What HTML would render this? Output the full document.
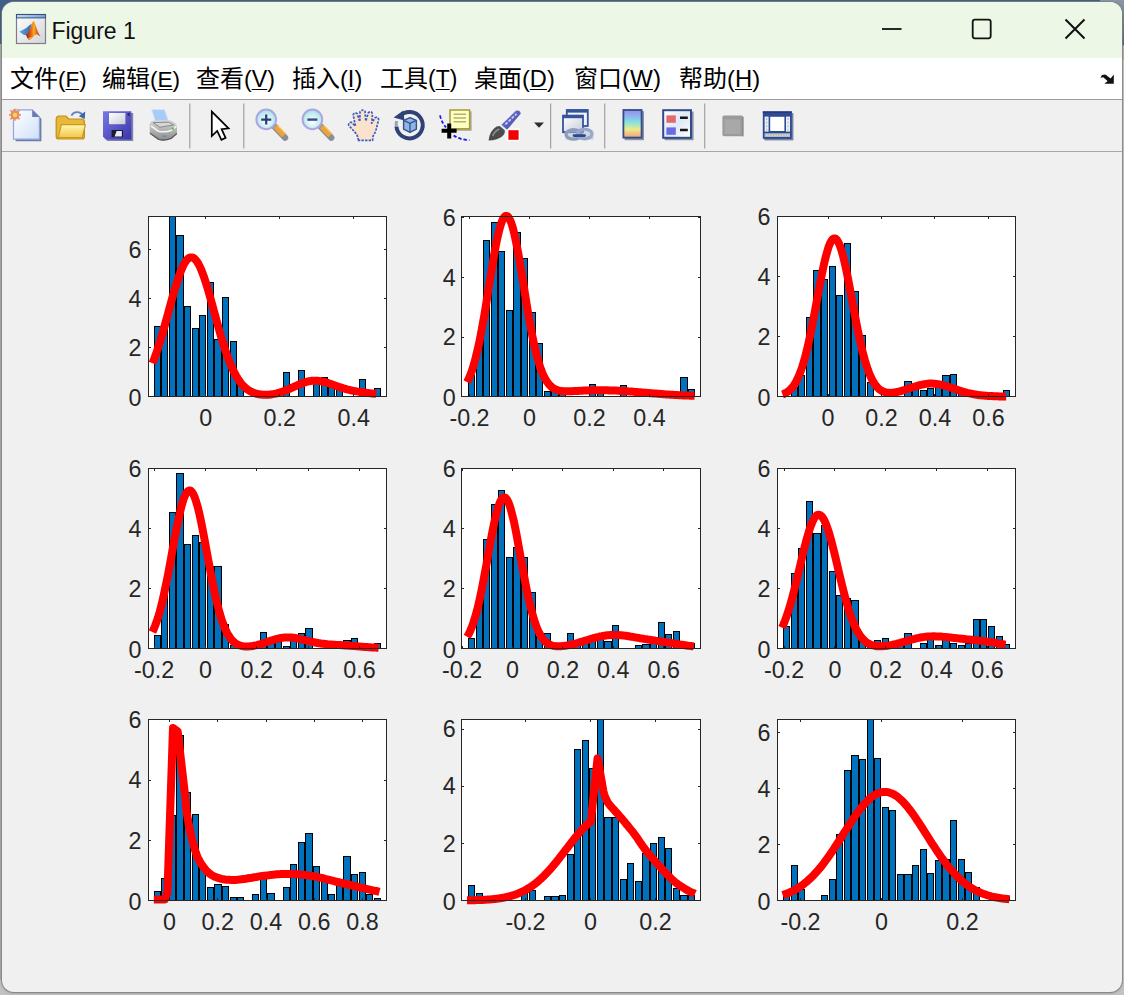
<!DOCTYPE html>
<html lang="zh-CN">
<head>
<meta charset="utf-8">
<title>Figure 1</title>
<style>
html,body{margin:0;padding:0;}
body{width:1124px;height:995px;overflow:hidden;position:relative;background:#c2c2c2;font-family:"Liberation Sans","Noto Sans CJK SC",sans-serif;}
.desk-top{position:absolute;left:0;top:0;width:1124px;height:44px;background:#3f6088;}
.desk-l{position:absolute;left:0;top:0;width:14px;height:980px;background:#ababab;}
.desk-r{position:absolute;left:1100px;top:0;width:24px;height:60px;background:linear-gradient(#8796a8,#6a7278 60%,#3c628f 75%,#b0b0b0 76%);}
.win{position:absolute;left:2px;top:2px;width:1120px;height:990px;border-radius:12px;background:#f0f0f0;overflow:hidden;box-shadow:0 0 0 1px rgba(130,130,130,.75),0 1px 3px 0 rgba(0,0,0,.28);}
.title{position:absolute;left:0;top:0;width:1120px;height:56px;background:#edf7e5;}
.title .t{position:absolute;left:49.4px;top:14px;font-size:23px;line-height:30px;color:#111;}
.menu{position:absolute;left:0;top:56px;width:1120px;height:41px;background:#fff;}
.menu span.m{position:absolute;top:4px;font-size:24px;line-height:34px;color:#000;white-space:nowrap;}
.menu b{font-weight:normal;font-size:22.4px;}
.menu u{text-decoration:underline;text-underline-offset:1.6px;text-decoration-thickness:1.3px;}
.tb{position:absolute;left:0;top:97px;width:1120px;height:53px;background:#f0f0f0;border-top:1px solid #9c9c9c;border-bottom:1px solid #a6a6a6;box-sizing:border-box;}
svg.ov{position:absolute;left:0;top:0;}
</style>
</head>
<body>
<div class="desk-l"></div>
<div class="desk-top"></div>
<div class="desk-r"></div>
<div class="win">
  <div class="title"><span class="t">Figure 1</span></div>
  <div class="menu">
    <span class="m" style="left:8px">文件<b style="font-size:22.4px">(<u>F</u>)</b></span>
    <span class="m" style="left:100px">编辑<b style="font-size:22.6px">(<u>E</u>)</b></span>
    <span class="m" style="left:194px">查看<b style="font-size:23.2px">(<u>V</u>)</b></span>
    <span class="m" style="left:290px">插入<b style="font-size:23.6px">(<u>I</u>)</b></span>
    <span class="m" style="left:378px">工具<b style="font-size:23px">(<u>T</u>)</b></span>
    <span class="m" style="left:472px">桌面<b style="font-size:23.6px">(<u>D</u>)</b></span>
    <span class="m" style="left:572px">窗口<b style="font-size:24.2px">(<u>W</u>)</b></span>
    <span class="m" style="left:677px">帮助<b style="font-size:23.8px">(<u>H</u>)</b></span>
  </div>
  <div class="tb"></div>
</div>
<svg class="ov" width="1124" height="995" viewBox="0 0 1124 995">
<defs>
  <linearGradient id="gPage" x1="0" y1="0" x2="1" y2="1"><stop offset="0" stop-color="#ffffff"/><stop offset="1" stop-color="#cfe0fb"/></linearGradient>
  <linearGradient id="gFold" x1="0" y1="0" x2="0" y2="1"><stop offset="0" stop-color="#fff6b0"/><stop offset="1" stop-color="#f3c64a"/></linearGradient>
  <linearGradient id="gSave" x1="0" y1="0" x2="1" y2="1"><stop offset="0" stop-color="#7a78e6"/><stop offset="1" stop-color="#3a34a8"/></linearGradient>
  <linearGradient id="gLabel" x1="0" y1="0" x2="1" y2="1"><stop offset="0" stop-color="#ffffff"/><stop offset="1" stop-color="#c8ccd8"/></linearGradient>
  <radialGradient id="gLens" cx="0.5" cy="0.6" r="0.6"><stop offset="0" stop-color="#ffffff"/><stop offset="0.6" stop-color="#c8eef2"/><stop offset="1" stop-color="#a8dce8"/></radialGradient>
  <linearGradient id="gCbar" x1="0" y1="0" x2="0" y2="1"><stop offset="0" stop-color="#9a8ce8"/><stop offset="0.25" stop-color="#8cb8f0"/><stop offset="0.45" stop-color="#86e4dc"/><stop offset="0.7" stop-color="#efe88a"/><stop offset="1" stop-color="#f2a07c"/></linearGradient>
  <linearGradient id="gLeg" x1="0" y1="0" x2="1" y2="1"><stop offset="0" stop-color="#ffffff"/><stop offset="0.5" stop-color="#dfe8f6"/><stop offset="1" stop-color="#ffffff"/></linearGradient>
  <linearGradient id="gPrn" x1="0" y1="0" x2="0" y2="1"><stop offset="0" stop-color="#d8d8d8"/><stop offset="1" stop-color="#8c8c8c"/></linearGradient>
  <linearGradient id="gIcoBody" x1="0" y1="0" x2="1" y2="1"><stop offset="0" stop-color="#ffffff"/><stop offset="1" stop-color="#d4d4d8"/></linearGradient>
  <linearGradient id="gIcoBar" x1="0" y1="0" x2="1" y2="0"><stop offset="0" stop-color="#b4dcf8"/><stop offset="1" stop-color="#6ea4dc"/></linearGradient>
  <linearGradient id="gMem" x1="0" y1="0" x2="1" y2="0"><stop offset="0" stop-color="#8a1c10"/><stop offset="0.35" stop-color="#e4601c"/><stop offset="0.55" stop-color="#f8b020"/><stop offset="0.75" stop-color="#e4581c"/><stop offset="1" stop-color="#a0281c"/></linearGradient>
  <linearGradient id="gMemB" x1="0" y1="0" x2="1" y2="0"><stop offset="0" stop-color="#58a8e0"/><stop offset="1" stop-color="#2c68a8"/></linearGradient>
  <linearGradient id="gHandle" x1="0" y1="0" x2="1" y2="1"><stop offset="0" stop-color="#7a80d8"/><stop offset="1" stop-color="#3c44a0"/></linearGradient>
</defs>

<!-- title-bar MATLAB figure icon -->
<g>
  <rect x="16.5" y="14.5" width="29" height="29" fill="url(#gIcoBody)" stroke="#7e7e88" stroke-width="1.2"/>
  <rect x="16.5" y="14.5" width="29" height="3.4" fill="url(#gIcoBar)" stroke="#3c5078" stroke-width="1"/>
  <path d="M19.3 31.7 L25.9 28.3 L30.2 24.7 L31.8 23.6 L29.4 31 L25.9 34.9 L24 35 Z" fill="url(#gMemB)"/>
  <path d="M25.9 34.8 C28.4 33 30.6 27.4 31.9 24.2 C32.4 22.8 33 21.2 33.5 21.1 C34.4 21.2 35 23.6 35.6 25.3 C36.6 28.2 37.4 30.6 38.2 32.4 C39 34.2 39.8 35.6 40.7 36.5 C39.4 36 38.4 34.8 37.3 34.4 C36.2 34.2 35.2 34.8 34.3 35.7 C33.2 36.8 32.2 37.8 31.4 38.6 C30.6 39.4 29.8 40 29 40.1 C28.4 39.4 27.8 38.4 27.1 37.4 C26.7 36.6 26.3 35.6 25.9 34.8 Z" fill="url(#gMem)"/>
  <path d="M29 40.1 C30.2 39.6 31.4 38.4 32.6 37 C31.2 37.2 29.6 37.2 28.2 38.6 Z" fill="#f8b828" opacity="0.9"/>
</g>

<!-- window buttons -->
<g stroke="#111" stroke-width="1.8" fill="none">
  <path d="M882 29 H901.5"/>
  <rect x="972.7" y="19.7" width="18" height="18.6" rx="2.2"/>
  <path d="M1065.5 19.5 L1084.5 38.5 M1084.5 19.5 L1065.5 38.5" stroke-width="2"/>
</g>

<!-- menu dock arrow -->
<g fill="#111">
  <path d="M1113.8 74.6 L1113.8 83.8 L1104.4 83.8 L1107.6 80.9 L1103.2 77.2 L1100.4 77.8 L1102 75 L1105.4 74.4 L1110.6 78.4 Z"/>
</g>

<!-- toolbar separators -->
<g stroke="#a2a2a2" stroke-width="1.2">
  <path d="M189.8 103.5 V148.5 M243.8 103.5 V148.5 M550.6 103.5 V148.5 M604.7 103.5 V148.5 M704.7 103.5 V148.5"/>
</g>

<!-- new -->
<g>
  <path d="M15.6 111.6 H34 L41.4 118.8 V141.2 H15.6 Z" fill="#6e7ca6"/>
  <path d="M13.5 109.8 H32.2 L39.4 117 V139.2 H13.5 Z" fill="url(#gPage)" stroke="#8da6dc" stroke-width="1.2"/>
  <path d="M32.2 109.8 V117 H39.4 Z" fill="#6c78b4"/>
  <g stroke="#e88a5c" stroke-width="1.7" stroke-linecap="butt" opacity="0.85">
    <path d="M15 108.8 V120.8 M9 114.8 H21 M10.4 110.2 L19.6 119.4 M19.6 110.2 L10.4 119.4"/>
  </g>
  <rect x="10.8" y="110.8" width="8.4" height="8.4" rx="2.4" fill="#ec8c5c"/>
  <circle cx="15" cy="115" r="2.2" fill="#f6d860"/>
</g>

<!-- open -->
<g>
  <path d="M56.2 119.4 Q56.2 116 59.4 116 H66 L68.6 119 H81.6 Q84.4 119 84.4 122 V136.4 Q84.4 139 81.6 139 H59 Q56.2 139 56.2 136.4 Z" fill="#e8b838" stroke="#c08e18" stroke-width="1.2"/>
  <path d="M61.4 124.6 H85.4 L82.2 137.6 H58 Z" fill="url(#gFold)" stroke="#c99a20" stroke-width="1.2" stroke-linejoin="round"/>
  <path d="M71.4 115.6 C73.6 111.4 80 110.6 83 115.4" fill="none" stroke="#5c84b8" stroke-width="1.8"/>
  <path d="M85.2 111.6 L84.8 119 L78.8 116.2 Z" fill="#3c64a8"/>
</g>

<!-- save -->
<g>
  <path d="M104.6 113 H133.2 V141 H107.4 L104.6 138.2 Z" fill="#5a5c98" opacity="0.75"/>
  <path d="M103 111.2 H131.4 V139.4 H105.8 L103 136.6 Z" fill="url(#gSave)"/>
  <rect x="109" y="113" width="16.4" height="11.2" fill="url(#gLabel)"/>
  <rect x="127.6" y="113" width="2.2" height="3" fill="#2a2670"/>
  <rect x="111.6" y="130" width="11.4" height="7.2" fill="#1c1c30"/>
  <path d="M116.6 131 H121.8 V136.4 H114.6 Z" fill="#e8eaf4"/>
</g>

<!-- print -->
<g>
  <path d="M151.6 109.6 H164.6 L168.6 121.2 H155.2 Z" fill="#a8ccf8" stroke="#d8e6f8" stroke-width="0.8"/>
  <path d="M149.6 125 Q149.4 121.4 154 120.6 L170 120.2 Q176.8 122.4 177 126.6 V133.4 L171.4 138.6 Q165 141.4 158.4 139.8 L149.8 133.4 Z" fill="url(#gPrn)"/>
  <path d="M151 126 L158.4 131.2 Q165 132.6 171.2 130.4 L176.4 126.4" fill="none" stroke="#f4f4f4" stroke-width="1.6"/>
  <path d="M153 122.6 L168.8 122.2 L173.4 125 L160 127.2 Z" fill="#d6d6d6" stroke="#787878" stroke-width="0.8"/>
  <path d="M150 133.2 L158.6 139.4 Q165 141 171.2 138.4 L176.8 133.4" fill="none" stroke="#5c5c5c" stroke-width="1.4"/>
  <rect x="171.6" y="127.6" width="2.2" height="2" fill="#40c848"/>
  <rect x="162.6" y="135.4" width="3.6" height="1.6" fill="#6c84d8"/>
</g>

<!-- pointer -->
<path d="M211.8 111.6 V136 L217.2 131 L221.4 139.8 L225.6 137.8 L221.6 129.2 L228.6 128.4 Z" fill="#fff" stroke="#000" stroke-width="1.7" stroke-linejoin="miter"/>

<!-- zoom in -->
<g>
  <path d="M275 127 L285 137.6" stroke="#8c8c98" stroke-width="6.4" stroke-linecap="round"/>
  <path d="M275.4 126.6 L283.8 135.4" stroke="#eba438" stroke-width="5" stroke-linecap="butt"/>
  <path d="M277.8 125.6 L286 134" stroke="#f6c868" stroke-width="1.2"/>
  <circle cx="266.2" cy="119.4" r="9.8" fill="url(#gLens)" stroke="#a9a9e2" stroke-width="2"/>
  <path d="M261.2 119.6 H271.2 M266.2 114.6 V124.6" stroke="#2a3a78" stroke-width="2.2"/>
</g>
<!-- zoom out -->
<g>
  <path d="M321.2 127 L331.2 137.6" stroke="#8c8c98" stroke-width="6.4" stroke-linecap="round"/>
  <path d="M321.6 126.6 L330 135.4" stroke="#eba438" stroke-width="5" stroke-linecap="butt"/>
  <path d="M324 125.6 L332.2 134" stroke="#f6c868" stroke-width="1.2"/>
  <circle cx="312.4" cy="119.4" r="9.8" fill="url(#gLens)" stroke="#a9a9e2" stroke-width="2"/>
  <path d="M307.4 119.6 H317.4" stroke="#3a4a88" stroke-width="2.4"/>
</g>

<!-- pan hand -->
<path d="M358.6 140.4 L357 134.6 L348.6 125.2 Q348.4 122 351.6 122.4 L355.4 126 L353.2 114.8 Q354.4 111.8 357.2 113.6 L359.8 121.6 L360 111.8 Q362.6 108.6 365 111.4 L365.8 121 L368.4 112.6 Q371.4 110.6 372.6 113.8 L371.6 123.2 L375.2 117.6 Q378.2 116.4 378.6 119.6 L375.6 131.6 L373 136.2 L372.6 140.4 Z" fill="#fbe2cc" stroke="#3a5cc4" stroke-width="1.7" stroke-dasharray="2.4 1.2" stroke-linejoin="round"/>

<!-- rotate 3d -->
<g>
  <path d="M400 116 A13.2 13.2 0 1 1 396.4 126.6" fill="none" stroke="#2e4278" stroke-width="4"/>
  <path d="M396.4 126.6 A13.2 13.2 0 0 1 396.6 121" fill="none" stroke="#2e4278" stroke-width="3" opacity="0.45"/>
  <path d="M393.6 117.4 L403.4 110.4 L404.4 120.6 Z" fill="#2e4278"/>
  <path d="M403.6 120.4 L410 117.6 L416.4 120.4 V129.2 L410 132.4 L403.6 129.2 Z" fill="#8fb4e6" stroke="#35508c" stroke-width="1.4" stroke-linejoin="round"/>
  <path d="M403.6 120.4 L410 123.4 L416.4 120.4 M410 123.4 V132.4" fill="none" stroke="#35508c" stroke-width="1.3"/>
</g>

<!-- data cursor -->
<g>
  <rect x="451.6" y="111.4" width="20" height="19.4" fill="#8c8c78" opacity="0.7"/>
  <rect x="450" y="110" width="19.6" height="18.8" fill="#ffffc4" stroke="#a49c34" stroke-width="1.5"/>
  <path d="M453.6 114.2 H466 M453.6 118 H466 M453.6 121.8 H466" stroke="#b4b070" stroke-width="1.6"/>
  <path d="M440 115.4 Q441.6 122.4 446 127.4" fill="none" stroke="#1818f0" stroke-width="1.8" stroke-dasharray="3.4 2"/>
  <path d="M453.6 135.4 Q460 139.8 469.4 140.2" fill="none" stroke="#1818f0" stroke-width="1.8" stroke-dasharray="3.4 2"/>
  <path d="M441.6 130.8 H456.6 M449.2 123.4 V138.6" stroke="#000" stroke-width="4"/>
</g>

<!-- brush -->
<g>
  <rect x="506.6" y="128.6" width="13.4" height="12.6" fill="#fff"/>
  <rect x="508.4" y="130.2" width="10.2" height="9.6" fill="#f40000"/>
  <path d="M501.4 124.8 L515.8 110.8 Q519.8 109.4 520.8 113.6 L507 129.8 Z" fill="url(#gHandle)"/>
  <path d="M505.4 124.4 L516.6 113.8" stroke="#d0d4f8" stroke-width="1.6" stroke-dasharray="3 1.4"/>
  <path d="M488.6 140.6 Q489.4 131 496.6 126.6 Q501 124.6 504.4 128.2 Q506.2 132.6 502 136.6 Q496.6 140.4 488.6 140.6 Z" fill="#4c4c4c"/>
  <path d="M492.6 136 Q494.4 131.2 499.4 129" fill="none" stroke="#8c8c8c" stroke-width="1.6"/>
  <path d="M500.6 125.6 L506.2 130.4" stroke="#e8e8f0" stroke-width="1.8"/>
</g>
<path d="M534 122.4 H544 L539 127.8 Z" fill="#2c2c2c"/>

<!-- link plots -->
<g>
  <rect x="566.8" y="110" width="21" height="16" fill="#eef2fa" stroke="#35549c" stroke-width="1.8"/>
  <rect x="566.8" y="109.6" width="21" height="3" fill="#35549c"/>
  <rect x="563" y="115.6" width="20" height="16.6" fill="url(#gLabel)" stroke="#35549c" stroke-width="1.8"/>
  <rect x="563" y="115.2" width="20" height="3" fill="#35549c"/>
  <path d="M565.4 139.8 H593.6 V131 Q590 127.6 585 128.4 L566 131 Z" fill="#b8c0d0" opacity="0.55"/>
  <ellipse cx="573.6" cy="134.4" rx="7.6" ry="4.8" fill="none" stroke="#8a9cc0" stroke-width="3.2"/>
  <ellipse cx="584.6" cy="134" rx="7.4" ry="4.8" fill="none" stroke="#98a8cc" stroke-width="3.2"/>
  <path d="M574 135.6 H584.6" stroke="#2c4888" stroke-width="2.6" stroke-linecap="round"/>
</g>

<!-- colorbar -->
<g>
  <rect x="624.6" y="111.2" width="19.4" height="29" fill="#6e7a9a" opacity="0.8"/>
  <rect x="623.4" y="110" width="18.2" height="27.6" fill="url(#gCbar)" stroke="#324a86" stroke-width="1.8"/>
</g>

<!-- legend -->
<g>
  <rect x="664.6" y="111.6" width="29" height="28.6" fill="#6e7a9a" opacity="0.8"/>
  <rect x="663.2" y="110.2" width="27.8" height="27.6" fill="url(#gLeg)" stroke="#324a86" stroke-width="2"/>
  <rect x="666.4" y="115.4" width="9.4" height="7.4" fill="#e26a6a"/>
  <rect x="666.4" y="127.4" width="9.4" height="7.4" fill="#6a6ae4"/>
  <path d="M680 117.8 H687.8 M680 130 H687.8" stroke="#151515" stroke-width="2.6"/>
</g>

<!-- hide plot tools (disabled grey) -->
<g>
  <rect x="722.4" y="115.4" width="20.8" height="20.8" rx="1.6" fill="#9a9a9a"/>
  <rect x="724.4" y="119.4" width="16" height="14.6" fill="#a8a8a8"/>
  <rect x="742" y="117" width="1.6" height="19.4" fill="#8c8c8c"/>
</g>

<!-- show plot tools -->
<g>
  <rect x="764.4" y="113" width="29" height="27.4" fill="#5a6890" opacity="0.8"/>
  <rect x="762.8" y="111.4" width="29" height="27.4" fill="#2f4a94"/>
  <rect x="762.8" y="111.4" width="29" height="1.6" fill="#24387a"/>
  <rect x="764.6" y="116.6" width="4" height="15" fill="#eceff6"/>
  <rect x="786" y="116.6" width="4" height="15" fill="#eceff6"/>
  <rect x="770.2" y="116.8" width="14.2" height="14.2" fill="#ffffff"/>
  <rect x="764.6" y="133.4" width="25.4" height="3.4" fill="#d8d8d0"/>
  <path d="M765 135 H789.6" stroke="#9c9c94" stroke-width="1" stroke-dasharray="1.4 1.2"/>
  <path d="M766.6 118 V130.4 M788 118 V130.4" stroke="#b8bccc" stroke-width="1.2" stroke-dasharray="2 1.6"/>
</g>

<clipPath id="cp0"><rect x="149" y="217" width="237" height="179"/></clipPath>
<clipPath id="cq0"><rect x="142" y="210" width="251" height="193"/></clipPath>
<rect x="148" y="216" width="239" height="181" fill="#fff"/>
<g clip-path="url(#cp0)" fill="#0072bd" stroke="#000" stroke-width="1">
<rect x="154.5" y="326.5" width="6.0" height="72.0"/>
<rect x="161.5" y="326.5" width="6.0" height="72.0"/>
<rect x="169.5" y="176.5" width="6.0" height="222.0"/>
<rect x="176.5" y="235.5" width="7.0" height="163.0"/>
<rect x="184.5" y="306.5" width="6.0" height="92.0"/>
<rect x="192.5" y="328.5" width="6.0" height="70.0"/>
<rect x="199.5" y="315.5" width="6.0" height="83.0"/>
<rect x="207.5" y="282.5" width="6.0" height="116.0"/>
<rect x="214.5" y="339.5" width="7.0" height="59.0"/>
<rect x="222.5" y="297.5" width="6.0" height="101.0"/>
<rect x="230.5" y="341.5" width="6.0" height="57.0"/>
<rect x="237.5" y="381.5" width="6.0" height="17.0"/>
<rect x="283.5" y="372.5" width="6.0" height="26.0"/>
<rect x="298.5" y="370.5" width="6.0" height="28.0"/>
<rect x="313.5" y="378.5" width="6.0" height="20.0"/>
<rect x="321.5" y="377.5" width="6.0" height="21.0"/>
<rect x="328.5" y="384.5" width="6.0" height="14.0"/>
<rect x="336.5" y="384.5" width="6.0" height="14.0"/>
<rect x="359.5" y="379.5" width="6.0" height="19.0"/>
<rect x="374.5" y="388.5" width="6.0" height="10.0"/>
</g>
<path d="M152.5 363.3 L153.9 359.8 L155.3 356.0 L156.7 352.0 L158.1 347.8 L159.5 343.4 L160.9 338.9 L162.3 334.1 L163.7 329.2 L165.1 324.2 L166.5 319.1 L167.9 314.0 L169.3 308.9 L170.7 303.7 L172.1 298.7 L173.5 293.7 L174.9 288.9 L176.3 284.3 L177.7 280.0 L179.1 275.9 L180.5 272.1 L181.9 268.7 L183.2 265.7 L184.6 263.1 L186.0 261.0 L187.4 259.3 L188.8 258.1 L190.2 257.5 L191.6 257.4 L193.0 257.7 L194.4 258.6 L195.8 260.0 L197.2 261.9 L198.6 264.2 L200.0 267.0 L201.4 270.2 L202.8 273.8 L204.2 277.7 L205.6 282.0 L207.0 286.4 L208.4 291.1 L209.8 296.0 L211.2 301.0 L212.6 306.1 L214.0 311.2 L215.4 316.4 L216.8 321.5 L218.2 326.5 L219.6 331.5 L221.0 336.3 L222.4 341.0 L223.8 345.5 L225.2 349.8 L226.6 353.9 L228.0 357.8 L229.4 361.5 L230.8 364.9 L232.2 368.1 L233.6 371.1 L235.0 373.8 L236.4 376.3 L237.8 378.6 L239.2 380.7 L240.6 382.6 L242.0 384.4 L243.4 385.9 L244.8 387.3 L246.2 388.5 L247.6 389.6 L249.0 390.5 L250.4 391.3 L251.8 392.0 L253.2 392.6 L254.6 393.2 L256.0 393.6 L257.4 394.0 L258.8 394.2 L260.2 394.5 L261.6 394.6 L263.0 394.7 L264.4 394.8 L265.8 394.8 L267.2 394.7 L268.6 394.7 L270.0 394.5 L271.4 394.4 L272.8 394.1 L274.2 393.9 L275.6 393.6 L277.0 393.3 L278.4 392.9 L279.8 392.5 L281.2 392.0 L282.6 391.6 L284.0 391.1 L285.4 390.5 L286.8 390.0 L288.2 389.4 L289.6 388.8 L291.0 388.1 L292.4 387.5 L293.8 386.9 L295.2 386.2 L296.6 385.6 L298.0 385.0 L299.4 384.4 L300.8 383.8 L302.2 383.3 L303.6 382.7 L305.0 382.3 L306.4 381.9 L307.8 381.5 L309.2 381.2 L310.6 381.0 L312.0 380.8 L313.4 380.7 L314.8 380.7 L316.2 380.7 L317.6 380.8 L319.0 380.9 L320.4 381.1 L321.8 381.4 L323.2 381.7 L324.6 382.0 L326.0 382.4 L327.4 382.8 L328.8 383.3 L330.2 383.7 L331.5 384.2 L332.9 384.7 L334.3 385.2 L335.7 385.7 L337.1 386.2 L338.5 386.7 L339.9 387.2 L341.3 387.6 L342.7 388.1 L344.1 388.5 L345.5 388.9 L346.9 389.3 L348.3 389.6 L349.7 390.0 L351.1 390.3 L352.5 390.6 L353.9 390.9 L355.3 391.1 L356.7 391.4 L358.1 391.6 L359.5 391.8 L360.9 392.0 L362.3 392.2 L363.7 392.4 L365.1 392.6 L366.5 392.8 L367.9 392.9 L369.3 393.1 L370.7 393.3 L372.1 393.4 L373.5 393.6 L374.9 393.7 L376.3 393.9" fill="none" stroke="#ff0000" stroke-width="8" stroke-linejoin="round" stroke-linecap="butt" clip-path="url(#cq0)"/>
<g stroke="#262626" stroke-width="1" fill="none" shape-rendering="crispEdges">
<rect x="148.5" y="216.5" width="238.0" height="180.0"/>
<path d="M205.5 396.5v-2.1M205.5 216.5v2.1"/>
<path d="M279.5 396.5v-2.1M279.5 216.5v2.1"/>
<path d="M353.5 396.5v-2.1M353.5 216.5v2.1"/>
<path d="M148.5 347.5h2.1M386.5 347.5h-2.1"/>
<path d="M148.5 298.5h2.1M386.5 298.5h-2.1"/>
<path d="M148.5 249.5h2.1M386.5 249.5h-2.1"/>
</g>
<g fill="#262626" font-size="23.3" font-family="'Liberation Sans', sans-serif">
<text x="205.8" y="426" text-anchor="middle">0</text>
<text x="279.8" y="426" text-anchor="middle">0.2</text>
<text x="353.8" y="426" text-anchor="middle">0.4</text>
<text x="141.5" y="406.0" text-anchor="end">0</text>
<text x="141.5" y="355.8" text-anchor="end">2</text>
<text x="141.5" y="306.8" text-anchor="end">4</text>
<text x="141.5" y="257.8" text-anchor="end">6</text>
</g>
<clipPath id="cp1"><rect x="462" y="217" width="238" height="179"/></clipPath>
<clipPath id="cq1"><rect x="455" y="210" width="252" height="193"/></clipPath>
<rect x="461" y="216" width="240" height="181" fill="#fff"/>
<g clip-path="url(#cp1)" fill="#0072bd" stroke="#000" stroke-width="1">
<rect x="468.5" y="375.5" width="6.0" height="23.0"/>
<rect x="476.5" y="341.5" width="6.0" height="57.0"/>
<rect x="483.5" y="240.5" width="6.0" height="158.0"/>
<rect x="491.5" y="222.5" width="6.0" height="176.0"/>
<rect x="498.5" y="251.5" width="6.0" height="147.0"/>
<rect x="506.5" y="310.5" width="6.0" height="88.0"/>
<rect x="513.5" y="232.5" width="7.0" height="166.0"/>
<rect x="521.5" y="258.5" width="6.0" height="140.0"/>
<rect x="529.5" y="312.5" width="6.0" height="86.0"/>
<rect x="536.5" y="343.5" width="6.0" height="55.0"/>
<rect x="544.5" y="391.5" width="6.0" height="7.0"/>
<rect x="551.5" y="388.5" width="7.0" height="10.0"/>
<rect x="559.5" y="388.5" width="6.0" height="10.0"/>
<rect x="589.5" y="384.5" width="6.0" height="14.0"/>
<rect x="597.5" y="387.5" width="6.0" height="11.0"/>
<rect x="620.5" y="385.5" width="6.0" height="13.0"/>
<rect x="680.5" y="377.5" width="7.0" height="21.0"/>
<rect x="688.5" y="389.5" width="6.0" height="9.0"/>
</g>
<path d="M467.1 382.1 L468.5 379.3 L469.9 376.0 L471.4 372.3 L472.8 368.1 L474.2 363.4 L475.6 358.1 L477.0 352.3 L478.5 346.0 L479.9 339.2 L481.3 331.9 L482.7 324.1 L484.2 315.9 L485.6 307.4 L487.0 298.6 L488.4 289.7 L489.8 280.8 L491.3 272.0 L492.7 263.3 L494.1 255.0 L495.5 247.2 L496.9 240.0 L498.4 233.6 L499.8 228.0 L501.2 223.3 L502.6 219.8 L504.1 217.3 L505.5 216.0 L506.9 215.9 L508.3 217.0 L509.7 219.3 L511.2 222.6 L512.6 227.1 L514.0 232.5 L515.4 238.8 L516.8 245.8 L518.3 253.5 L519.7 261.6 L521.1 270.1 L522.5 278.9 L524.0 287.7 L525.4 296.5 L526.8 305.2 L528.2 313.6 L529.6 321.7 L531.1 329.4 L532.5 336.7 L533.9 343.4 L535.3 349.7 L536.7 355.4 L538.2 360.6 L539.6 365.2 L541.0 369.4 L542.4 373.0 L543.8 376.2 L545.3 378.9 L546.7 381.3 L548.1 383.3 L549.5 385.0 L551.0 386.4 L552.4 387.6 L553.8 388.5 L555.2 389.3 L556.6 389.8 L558.1 390.3 L559.5 390.7 L560.9 390.9 L562.3 391.1 L563.7 391.2 L565.2 391.3 L566.6 391.3 L568.0 391.3 L569.4 391.3 L570.9 391.2 L572.3 391.2 L573.7 391.1 L575.1 391.1 L576.5 391.0 L578.0 390.9 L579.4 390.8 L580.8 390.8 L582.2 390.7 L583.6 390.6 L585.1 390.6 L586.5 390.5 L587.9 390.5 L589.3 390.4 L590.7 390.4 L592.2 390.3 L593.6 390.3 L595.0 390.3 L596.4 390.3 L597.9 390.2 L599.3 390.2 L600.7 390.2 L602.1 390.2 L603.5 390.3 L605.0 390.3 L606.4 390.3 L607.8 390.3 L609.2 390.4 L610.6 390.4 L612.1 390.5 L613.5 390.5 L614.9 390.6 L616.3 390.6 L617.8 390.7 L619.2 390.8 L620.6 390.9 L622.0 390.9 L623.4 391.0 L624.9 391.1 L626.3 391.2 L627.7 391.3 L629.1 391.4 L630.5 391.5 L632.0 391.6 L633.4 391.7 L634.8 391.9 L636.2 392.0 L637.6 392.1 L639.1 392.2 L640.5 392.3 L641.9 392.4 L643.3 392.6 L644.8 392.7 L646.2 392.8 L647.6 392.9 L649.0 393.0 L650.4 393.2 L651.9 393.3 L653.3 393.4 L654.7 393.5 L656.1 393.6 L657.5 393.7 L659.0 393.8 L660.4 394.0 L661.8 394.1 L663.2 394.2 L664.7 394.3 L666.1 394.4 L667.5 394.5 L668.9 394.6 L670.3 394.7 L671.8 394.7 L673.2 394.8 L674.6 394.9 L676.0 395.0 L677.4 395.1 L678.9 395.2 L680.3 395.2 L681.7 395.3 L683.1 395.4 L684.6 395.4 L686.0 395.5 L687.4 395.6 L688.8 395.6 L690.2 395.7 L691.7 395.7 L693.1 395.8 L694.5 395.8" fill="none" stroke="#ff0000" stroke-width="8" stroke-linejoin="round" stroke-linecap="butt" clip-path="url(#cq1)"/>
<g stroke="#262626" stroke-width="1" fill="none" shape-rendering="crispEdges">
<rect x="461.5" y="216.5" width="239.0" height="180.0"/>
<path d="M469.5 396.5v-2.1M469.5 216.5v2.1"/>
<path d="M529.5 396.5v-2.1M529.5 216.5v2.1"/>
<path d="M589.5 396.5v-2.1M589.5 216.5v2.1"/>
<path d="M649.5 396.5v-2.1M649.5 216.5v2.1"/>
<path d="M461.5 337.5h2.1M700.5 337.5h-2.1"/>
<path d="M461.5 277.5h2.1M700.5 277.5h-2.1"/>
<path d="M461.5 217.5h2.1M700.5 217.5h-2.1"/>
</g>
<g fill="#262626" font-size="23.3" font-family="'Liberation Sans', sans-serif">
<text x="469.5" y="426" text-anchor="middle">-0.2</text>
<text x="529.5" y="426" text-anchor="middle">0</text>
<text x="589.5" y="426" text-anchor="middle">0.2</text>
<text x="649.5" y="426" text-anchor="middle">0.4</text>
<text x="455.8" y="406.0" text-anchor="end">0</text>
<text x="455.8" y="345.2" text-anchor="end">2</text>
<text x="455.8" y="285.6" text-anchor="end">4</text>
<text x="455.8" y="226.0" text-anchor="end">6</text>
</g>
<clipPath id="cp2"><rect x="778" y="217" width="237" height="179"/></clipPath>
<clipPath id="cq2"><rect x="771" y="210" width="251" height="193"/></clipPath>
<rect x="777" y="216" width="239" height="181" fill="#fff"/>
<g clip-path="url(#cp2)" fill="#0072bd" stroke="#000" stroke-width="1">
<rect x="791.5" y="387.5" width="6.0" height="11.0"/>
<rect x="798.5" y="375.5" width="6.0" height="23.0"/>
<rect x="806.5" y="317.5" width="6.0" height="81.0"/>
<rect x="813.5" y="270.5" width="7.0" height="128.0"/>
<rect x="821.5" y="279.5" width="6.0" height="119.0"/>
<rect x="829.5" y="266.5" width="6.0" height="132.0"/>
<rect x="836.5" y="295.5" width="6.0" height="103.0"/>
<rect x="844.5" y="243.5" width="6.0" height="155.0"/>
<rect x="851.5" y="291.5" width="7.0" height="107.0"/>
<rect x="859.5" y="335.5" width="6.0" height="63.0"/>
<rect x="867.5" y="382.5" width="6.0" height="16.0"/>
<rect x="904.5" y="381.5" width="7.0" height="17.0"/>
<rect x="912.5" y="384.5" width="6.0" height="14.0"/>
<rect x="920.5" y="390.5" width="6.0" height="8.0"/>
<rect x="927.5" y="388.5" width="6.0" height="10.0"/>
<rect x="935.5" y="381.5" width="6.0" height="17.0"/>
<rect x="942.5" y="375.5" width="7.0" height="23.0"/>
<rect x="950.5" y="374.5" width="6.0" height="24.0"/>
<rect x="958.5" y="393.5" width="6.0" height="5.0"/>
<rect x="1003.5" y="390.5" width="6.0" height="8.0"/>
</g>
<path d="M782.5 394.4 L783.9 393.9 L785.3 393.2 L786.7 392.4 L788.1 391.5 L789.5 390.3 L790.9 389.0 L792.3 387.4 L793.7 385.5 L795.1 383.4 L796.5 380.9 L797.9 378.1 L799.3 374.8 L800.7 371.2 L802.1 367.2 L803.5 362.7 L804.9 357.8 L806.3 352.4 L807.7 346.6 L809.1 340.4 L810.5 333.8 L811.9 326.9 L813.3 319.8 L814.7 312.4 L816.1 304.8 L817.5 297.2 L818.9 289.7 L820.3 282.3 L821.7 275.1 L823.1 268.3 L824.5 262.0 L825.9 256.3 L827.3 251.2 L828.6 246.8 L830.0 243.4 L831.4 240.8 L832.8 239.1 L834.2 238.4 L835.6 238.7 L837.0 240.0 L838.4 242.3 L839.8 245.4 L841.2 249.5 L842.6 254.3 L844.0 259.8 L845.4 265.9 L846.8 272.5 L848.2 279.6 L849.6 286.9 L851.0 294.4 L852.4 302.0 L853.8 309.5 L855.2 317.0 L856.6 324.2 L858.0 331.2 L859.4 337.9 L860.8 344.2 L862.2 350.2 L863.6 355.7 L865.0 360.7 L866.4 365.3 L867.8 369.5 L869.2 373.2 L870.6 376.5 L872.0 379.5 L873.4 382.0 L874.8 384.2 L876.2 386.1 L877.6 387.6 L879.0 389.0 L880.4 390.0 L881.8 390.9 L883.2 391.6 L884.6 392.1 L886.0 392.5 L887.4 392.7 L888.7 392.8 L890.1 392.9 L891.5 392.8 L892.9 392.7 L894.3 392.5 L895.7 392.3 L897.1 392.0 L898.5 391.7 L899.9 391.3 L901.3 391.0 L902.7 390.5 L904.1 390.1 L905.5 389.7 L906.9 389.2 L908.3 388.7 L909.7 388.2 L911.1 387.8 L912.5 387.3 L913.9 386.9 L915.3 386.4 L916.7 386.0 L918.1 385.6 L919.5 385.2 L920.9 384.9 L922.3 384.6 L923.7 384.3 L925.1 384.1 L926.5 383.9 L927.9 383.7 L929.3 383.6 L930.7 383.6 L932.1 383.6 L933.5 383.7 L934.9 383.8 L936.3 383.9 L937.7 384.1 L939.1 384.3 L940.5 384.6 L941.9 384.9 L943.3 385.3 L944.7 385.7 L946.1 386.1 L947.5 386.5 L948.8 386.9 L950.2 387.4 L951.6 387.9 L953.0 388.3 L954.4 388.8 L955.8 389.3 L957.2 389.8 L958.6 390.3 L960.0 390.7 L961.4 391.2 L962.8 391.6 L964.2 392.0 L965.6 392.4 L967.0 392.8 L968.4 393.1 L969.8 393.4 L971.2 393.7 L972.6 394.0 L974.0 394.3 L975.4 394.5 L976.8 394.8 L978.2 395.0 L979.6 395.2 L981.0 395.3 L982.4 395.5 L983.8 395.6 L985.2 395.7 L986.6 395.8 L988.0 395.9 L989.4 396.0 L990.8 396.1 L992.2 396.1 L993.6 396.2 L995.0 396.2 L996.4 396.3 L997.8 396.3 L999.2 396.4 L1000.6 396.4 L1002.0 396.4 L1003.4 396.4 L1004.8 396.4 L1006.2 396.4" fill="none" stroke="#ff0000" stroke-width="8" stroke-linejoin="round" stroke-linecap="butt" clip-path="url(#cq2)"/>
<g stroke="#262626" stroke-width="1" fill="none" shape-rendering="crispEdges">
<rect x="777.5" y="216.5" width="238.0" height="180.0"/>
<path d="M828.5 396.5v-2.1M828.5 216.5v2.1"/>
<path d="M881.5 396.5v-2.1M881.5 216.5v2.1"/>
<path d="M934.5 396.5v-2.1M934.5 216.5v2.1"/>
<path d="M988.5 396.5v-2.1M988.5 216.5v2.1"/>
<path d="M777.5 336.5h2.1M1015.5 336.5h-2.1"/>
<path d="M777.5 276.5h2.1M1015.5 276.5h-2.1"/>
</g>
<g fill="#262626" font-size="23.3" font-family="'Liberation Sans', sans-serif">
<text x="828.0" y="426" text-anchor="middle">0</text>
<text x="881.5" y="426" text-anchor="middle">0.2</text>
<text x="935.0" y="426" text-anchor="middle">0.4</text>
<text x="988.5" y="426" text-anchor="middle">0.6</text>
<text x="770.5" y="406.0" text-anchor="end">0</text>
<text x="770.5" y="344.8" text-anchor="end">2</text>
<text x="770.5" y="284.8" text-anchor="end">4</text>
<text x="770.5" y="224.8" text-anchor="end">6</text>
</g>
<clipPath id="cp3"><rect x="149" y="469" width="237" height="179"/></clipPath>
<clipPath id="cq3"><rect x="142" y="462" width="251" height="193"/></clipPath>
<rect x="148" y="468" width="239" height="181" fill="#fff"/>
<g clip-path="url(#cp3)" fill="#0072bd" stroke="#000" stroke-width="1">
<rect x="154.5" y="635.5" width="6.0" height="15.0"/>
<rect x="161.5" y="588.5" width="6.0" height="62.0"/>
<rect x="169.5" y="512.5" width="6.0" height="138.0"/>
<rect x="176.5" y="473.5" width="7.0" height="177.0"/>
<rect x="184.5" y="544.5" width="6.0" height="106.0"/>
<rect x="192.5" y="535.5" width="6.0" height="115.0"/>
<rect x="199.5" y="542.5" width="6.0" height="108.0"/>
<rect x="207.5" y="566.5" width="6.0" height="84.0"/>
<rect x="214.5" y="566.5" width="7.0" height="84.0"/>
<rect x="222.5" y="624.5" width="6.0" height="26.0"/>
<rect x="230.5" y="645.5" width="6.0" height="5.0"/>
<rect x="260.5" y="632.5" width="6.0" height="18.0"/>
<rect x="267.5" y="639.5" width="7.0" height="11.0"/>
<rect x="275.5" y="639.5" width="6.0" height="11.0"/>
<rect x="283.5" y="646.5" width="6.0" height="4.0"/>
<rect x="290.5" y="639.5" width="6.0" height="11.0"/>
<rect x="298.5" y="633.5" width="6.0" height="17.0"/>
<rect x="305.5" y="628.5" width="7.0" height="22.0"/>
<rect x="343.5" y="640.5" width="7.0" height="10.0"/>
<rect x="351.5" y="638.5" width="6.0" height="12.0"/>
<rect x="374.5" y="643.5" width="6.0" height="7.0"/>
</g>
<path d="M152.4 632.0 L153.8 629.0 L155.2 625.5 L156.6 621.7 L158.1 617.3 L159.5 612.6 L160.9 607.3 L162.3 601.6 L163.7 595.5 L165.1 588.9 L166.5 582.0 L168.0 574.7 L169.4 567.2 L170.8 559.6 L172.2 551.8 L173.6 544.0 L175.0 536.4 L176.4 529.0 L177.9 522.0 L179.3 515.4 L180.7 509.3 L182.1 504.0 L183.5 499.4 L184.9 495.7 L186.3 493.0 L187.8 491.2 L189.2 490.4 L190.6 490.7 L192.0 492.0 L193.4 494.3 L194.8 497.6 L196.2 501.8 L197.7 506.8 L199.1 512.5 L200.5 518.8 L201.9 525.7 L203.3 533.0 L204.7 540.5 L206.1 548.2 L207.5 556.0 L209.0 563.7 L210.4 571.3 L211.8 578.7 L213.2 585.7 L214.6 592.5 L216.0 598.8 L217.4 604.7 L218.9 610.2 L220.3 615.2 L221.7 619.7 L223.1 623.8 L224.5 627.4 L225.9 630.6 L227.3 633.4 L228.8 635.8 L230.2 637.9 L231.6 639.7 L233.0 641.2 L234.4 642.5 L235.8 643.5 L237.2 644.4 L238.7 645.0 L240.1 645.5 L241.5 645.9 L242.9 646.2 L244.3 646.4 L245.7 646.5 L247.1 646.5 L248.6 646.4 L250.0 646.3 L251.4 646.2 L252.8 646.0 L254.2 645.7 L255.6 645.4 L257.0 645.1 L258.5 644.7 L259.9 644.3 L261.3 643.9 L262.7 643.5 L264.1 643.0 L265.5 642.5 L266.9 642.1 L268.3 641.6 L269.8 641.1 L271.2 640.6 L272.6 640.2 L274.0 639.7 L275.4 639.3 L276.8 638.9 L278.2 638.6 L279.7 638.2 L281.1 638.0 L282.5 637.8 L283.9 637.6 L285.3 637.5 L286.7 637.4 L288.1 637.4 L289.6 637.4 L291.0 637.5 L292.4 637.6 L293.8 637.8 L295.2 638.0 L296.6 638.3 L298.0 638.5 L299.5 638.8 L300.9 639.2 L302.3 639.5 L303.7 639.9 L305.1 640.2 L306.5 640.6 L307.9 640.9 L309.4 641.3 L310.8 641.6 L312.2 641.9 L313.6 642.2 L315.0 642.5 L316.4 642.8 L317.8 643.0 L319.3 643.3 L320.7 643.5 L322.1 643.7 L323.5 643.8 L324.9 644.0 L326.3 644.1 L327.7 644.3 L329.1 644.4 L330.6 644.5 L332.0 644.6 L333.4 644.7 L334.8 644.8 L336.2 644.9 L337.6 644.9 L339.0 645.0 L340.5 645.1 L341.9 645.2 L343.3 645.3 L344.7 645.4 L346.1 645.5 L347.5 645.6 L348.9 645.7 L350.4 645.8 L351.8 645.9 L353.2 646.0 L354.6 646.1 L356.0 646.2 L357.4 646.3 L358.8 646.4 L360.3 646.6 L361.7 646.7 L363.1 646.8 L364.5 646.9 L365.9 647.0 L367.3 647.1 L368.7 647.2 L370.2 647.3 L371.6 647.4 L373.0 647.5 L374.4 647.6 L375.8 647.6 L377.2 647.7 L378.6 647.8" fill="none" stroke="#ff0000" stroke-width="8" stroke-linejoin="round" stroke-linecap="butt" clip-path="url(#cq3)"/>
<g stroke="#262626" stroke-width="1" fill="none" shape-rendering="crispEdges">
<rect x="148.5" y="468.5" width="238.0" height="180.0"/>
<path d="M154.5 648.5v-2.1M154.5 468.5v2.1"/>
<path d="M205.5 648.5v-2.1M205.5 468.5v2.1"/>
<path d="M256.5 648.5v-2.1M256.5 468.5v2.1"/>
<path d="M308.5 648.5v-2.1M308.5 468.5v2.1"/>
<path d="M359.5 648.5v-2.1M359.5 468.5v2.1"/>
<path d="M148.5 588.5h2.1M386.5 588.5h-2.1"/>
<path d="M148.5 528.5h2.1M386.5 528.5h-2.1"/>
</g>
<g fill="#262626" font-size="23.3" font-family="'Liberation Sans', sans-serif">
<text x="154.2" y="678" text-anchor="middle">-0.2</text>
<text x="205.5" y="678" text-anchor="middle">0</text>
<text x="256.8" y="678" text-anchor="middle">0.2</text>
<text x="308.1" y="678" text-anchor="middle">0.4</text>
<text x="359.4" y="678" text-anchor="middle">0.6</text>
<text x="141.5" y="658.0" text-anchor="end">0</text>
<text x="141.5" y="596.8" text-anchor="end">2</text>
<text x="141.5" y="536.8" text-anchor="end">4</text>
<text x="141.5" y="476.8" text-anchor="end">6</text>
</g>
<clipPath id="cp4"><rect x="462" y="469" width="238" height="179"/></clipPath>
<clipPath id="cq4"><rect x="455" y="462" width="252" height="193"/></clipPath>
<rect x="461" y="468" width="240" height="181" fill="#fff"/>
<g clip-path="url(#cp4)" fill="#0072bd" stroke="#000" stroke-width="1">
<rect x="468.5" y="638.5" width="6.0" height="12.0"/>
<rect x="476.5" y="603.5" width="6.0" height="47.0"/>
<rect x="483.5" y="539.5" width="6.0" height="111.0"/>
<rect x="491.5" y="504.5" width="6.0" height="146.0"/>
<rect x="498.5" y="490.5" width="6.0" height="160.0"/>
<rect x="506.5" y="557.5" width="6.0" height="93.0"/>
<rect x="513.5" y="547.5" width="7.0" height="103.0"/>
<rect x="521.5" y="557.5" width="6.0" height="93.0"/>
<rect x="529.5" y="592.5" width="6.0" height="58.0"/>
<rect x="536.5" y="636.5" width="6.0" height="14.0"/>
<rect x="544.5" y="633.5" width="6.0" height="17.0"/>
<rect x="551.5" y="645.5" width="7.0" height="5.0"/>
<rect x="567.5" y="633.5" width="6.0" height="17.0"/>
<rect x="574.5" y="642.5" width="6.0" height="8.0"/>
<rect x="582.5" y="639.5" width="6.0" height="11.0"/>
<rect x="589.5" y="639.5" width="6.0" height="11.0"/>
<rect x="597.5" y="636.5" width="6.0" height="14.0"/>
<rect x="604.5" y="641.5" width="7.0" height="9.0"/>
<rect x="612.5" y="625.5" width="6.0" height="25.0"/>
<rect x="635.5" y="645.5" width="6.0" height="5.0"/>
<rect x="642.5" y="644.5" width="7.0" height="6.0"/>
<rect x="650.5" y="642.5" width="6.0" height="8.0"/>
<rect x="658.5" y="622.5" width="6.0" height="28.0"/>
<rect x="665.5" y="634.5" width="6.0" height="16.0"/>
<rect x="673.5" y="631.5" width="6.0" height="19.0"/>
<rect x="688.5" y="643.5" width="6.0" height="7.0"/>
</g>
<path d="M467.1 636.8 L468.6 634.3 L470.0 631.4 L471.4 628.1 L472.8 624.4 L474.2 620.1 L475.6 615.4 L477.1 610.2 L478.5 604.4 L479.9 598.2 L481.3 591.5 L482.7 584.4 L484.1 577.0 L485.5 569.4 L487.0 561.5 L488.4 553.6 L489.8 545.7 L491.2 538.0 L492.6 530.6 L494.0 523.7 L495.5 517.3 L496.9 511.6 L498.3 506.8 L499.7 502.8 L501.1 499.9 L502.5 498.1 L504.0 497.3 L505.4 497.7 L506.8 499.2 L508.2 501.8 L509.6 505.4 L511.0 510.0 L512.4 515.4 L513.9 521.5 L515.3 528.3 L516.7 535.6 L518.1 543.2 L519.5 551.0 L520.9 558.9 L522.4 566.8 L523.8 574.5 L525.2 582.0 L526.6 589.2 L528.0 596.0 L529.4 602.4 L530.9 608.3 L532.3 613.6 L533.7 618.5 L535.1 622.9 L536.5 626.8 L537.9 630.2 L539.4 633.2 L540.8 635.7 L542.2 637.9 L543.6 639.8 L545.0 641.3 L546.4 642.5 L547.8 643.6 L549.3 644.4 L550.7 645.0 L552.1 645.5 L553.5 645.9 L554.9 646.1 L556.3 646.2 L557.8 646.3 L559.2 646.3 L560.6 646.3 L562.0 646.1 L563.4 646.0 L564.8 645.8 L566.3 645.6 L567.7 645.3 L569.1 645.1 L570.5 644.8 L571.9 644.4 L573.3 644.1 L574.8 643.7 L576.2 643.4 L577.6 643.0 L579.0 642.6 L580.4 642.1 L581.8 641.7 L583.2 641.3 L584.7 640.8 L586.1 640.4 L587.5 640.0 L588.9 639.5 L590.3 639.1 L591.7 638.7 L593.2 638.2 L594.6 637.8 L596.0 637.5 L597.4 637.1 L598.8 636.8 L600.2 636.4 L601.7 636.2 L603.1 635.9 L604.5 635.7 L605.9 635.5 L607.3 635.3 L608.7 635.2 L610.1 635.1 L611.6 635.0 L613.0 634.9 L614.4 634.9 L615.8 635.0 L617.2 635.0 L618.6 635.1 L620.1 635.2 L621.5 635.3 L622.9 635.5 L624.3 635.6 L625.7 635.8 L627.1 636.0 L628.6 636.2 L630.0 636.5 L631.4 636.7 L632.8 636.9 L634.2 637.2 L635.6 637.4 L637.1 637.7 L638.5 637.9 L639.9 638.2 L641.3 638.4 L642.7 638.6 L644.1 638.9 L645.5 639.1 L647.0 639.3 L648.4 639.6 L649.8 639.8 L651.2 640.0 L652.6 640.2 L654.0 640.4 L655.5 640.7 L656.9 640.9 L658.3 641.1 L659.7 641.3 L661.1 641.5 L662.5 641.7 L664.0 641.9 L665.4 642.2 L666.8 642.4 L668.2 642.6 L669.6 642.8 L671.0 643.0 L672.4 643.3 L673.9 643.5 L675.3 643.7 L676.7 643.9 L678.1 644.2 L679.5 644.4 L680.9 644.6 L682.4 644.8 L683.8 645.0 L685.2 645.3 L686.6 645.5 L688.0 645.7 L689.4 645.9 L690.9 646.0 L692.3 646.2 L693.7 646.4" fill="none" stroke="#ff0000" stroke-width="8" stroke-linejoin="round" stroke-linecap="butt" clip-path="url(#cq4)"/>
<g stroke="#262626" stroke-width="1" fill="none" shape-rendering="crispEdges">
<rect x="461.5" y="468.5" width="239.0" height="180.0"/>
<path d="M462.5 648.5v-2.1M462.5 468.5v2.1"/>
<path d="M512.5 648.5v-2.1M512.5 468.5v2.1"/>
<path d="M562.5 648.5v-2.1M562.5 468.5v2.1"/>
<path d="M613.5 648.5v-2.1M613.5 468.5v2.1"/>
<path d="M663.5 648.5v-2.1M663.5 468.5v2.1"/>
<path d="M461.5 588.5h2.1M700.5 588.5h-2.1"/>
<path d="M461.5 528.5h2.1M700.5 528.5h-2.1"/>
</g>
<g fill="#262626" font-size="23.3" font-family="'Liberation Sans', sans-serif">
<text x="462.1" y="678" text-anchor="middle">-0.2</text>
<text x="512.5" y="678" text-anchor="middle">0</text>
<text x="562.9" y="678" text-anchor="middle">0.2</text>
<text x="613.3" y="678" text-anchor="middle">0.4</text>
<text x="663.7" y="678" text-anchor="middle">0.6</text>
<text x="455.8" y="658.0" text-anchor="end">0</text>
<text x="455.8" y="596.8" text-anchor="end">2</text>
<text x="455.8" y="536.8" text-anchor="end">4</text>
<text x="455.8" y="476.8" text-anchor="end">6</text>
</g>
<clipPath id="cp5"><rect x="778" y="469" width="237" height="179"/></clipPath>
<clipPath id="cq5"><rect x="771" y="462" width="251" height="193"/></clipPath>
<rect x="777" y="468" width="239" height="181" fill="#fff"/>
<g clip-path="url(#cp5)" fill="#0072bd" stroke="#000" stroke-width="1">
<rect x="783.5" y="626.5" width="6.0" height="24.0"/>
<rect x="791.5" y="573.5" width="6.0" height="77.0"/>
<rect x="798.5" y="548.5" width="6.0" height="102.0"/>
<rect x="806.5" y="501.5" width="6.0" height="149.0"/>
<rect x="813.5" y="533.5" width="7.0" height="117.0"/>
<rect x="821.5" y="525.5" width="6.0" height="125.0"/>
<rect x="829.5" y="571.5" width="6.0" height="79.0"/>
<rect x="836.5" y="595.5" width="6.0" height="55.0"/>
<rect x="844.5" y="598.5" width="6.0" height="52.0"/>
<rect x="851.5" y="600.5" width="7.0" height="50.0"/>
<rect x="859.5" y="639.5" width="6.0" height="11.0"/>
<rect x="867.5" y="645.5" width="6.0" height="5.0"/>
<rect x="874.5" y="640.5" width="6.0" height="10.0"/>
<rect x="882.5" y="638.5" width="6.0" height="12.0"/>
<rect x="889.5" y="645.5" width="6.0" height="5.0"/>
<rect x="897.5" y="642.5" width="6.0" height="8.0"/>
<rect x="904.5" y="633.5" width="7.0" height="17.0"/>
<rect x="920.5" y="643.5" width="6.0" height="7.0"/>
<rect x="927.5" y="639.5" width="6.0" height="11.0"/>
<rect x="935.5" y="645.5" width="6.0" height="5.0"/>
<rect x="942.5" y="639.5" width="7.0" height="11.0"/>
<rect x="950.5" y="643.5" width="6.0" height="7.0"/>
<rect x="958.5" y="645.5" width="6.0" height="5.0"/>
<rect x="965.5" y="643.5" width="6.0" height="7.0"/>
<rect x="973.5" y="619.5" width="6.0" height="31.0"/>
<rect x="980.5" y="619.5" width="6.0" height="31.0"/>
<rect x="988.5" y="626.5" width="6.0" height="24.0"/>
<rect x="996.5" y="636.5" width="6.0" height="14.0"/>
<rect x="1003.5" y="644.5" width="6.0" height="6.0"/>
</g>
<path d="M782.0 627.7 L783.4 624.6 L784.8 621.2 L786.2 617.4 L787.6 613.4 L789.0 609.0 L790.4 604.3 L791.8 599.4 L793.2 594.1 L794.6 588.7 L796.0 583.0 L797.4 577.2 L798.8 571.3 L800.2 565.3 L801.6 559.4 L803.0 553.6 L804.4 547.9 L805.8 542.4 L807.2 537.3 L808.6 532.5 L810.0 528.2 L811.4 524.4 L812.7 521.2 L814.1 518.5 L815.5 516.6 L816.9 515.3 L818.3 514.7 L819.7 514.9 L821.1 515.8 L822.5 517.3 L823.9 519.6 L825.3 522.5 L826.7 526.0 L828.1 530.0 L829.5 534.5 L830.9 539.4 L832.3 544.7 L833.7 550.3 L835.1 556.0 L836.5 561.9 L837.9 567.9 L839.3 573.8 L840.7 579.7 L842.1 585.4 L843.5 591.0 L844.9 596.4 L846.3 601.5 L847.7 606.3 L849.1 610.9 L850.5 615.1 L851.9 619.0 L853.3 622.6 L854.7 625.9 L856.1 628.8 L857.5 631.5 L858.9 633.8 L860.3 635.9 L861.7 637.7 L863.1 639.3 L864.5 640.7 L865.9 641.9 L867.3 642.9 L868.7 643.7 L870.1 644.4 L871.5 644.9 L872.9 645.4 L874.3 645.7 L875.7 646.0 L877.1 646.2 L878.5 646.3 L879.9 646.3 L881.3 646.3 L882.7 646.2 L884.1 646.1 L885.5 646.0 L886.8 645.8 L888.2 645.6 L889.6 645.3 L891.0 645.1 L892.4 644.8 L893.8 644.5 L895.2 644.1 L896.6 643.8 L898.0 643.4 L899.4 643.1 L900.8 642.7 L902.2 642.3 L903.6 641.9 L905.0 641.5 L906.4 641.1 L907.8 640.7 L909.2 640.3 L910.6 639.9 L912.0 639.5 L913.4 639.1 L914.8 638.8 L916.2 638.4 L917.6 638.1 L919.0 637.8 L920.4 637.5 L921.8 637.3 L923.2 637.1 L924.6 636.9 L926.0 636.7 L927.4 636.6 L928.8 636.5 L930.2 636.4 L931.6 636.4 L933.0 636.3 L934.4 636.3 L935.8 636.4 L937.2 636.4 L938.6 636.5 L940.0 636.5 L941.4 636.6 L942.8 636.8 L944.2 636.9 L945.6 637.0 L947.0 637.2 L948.4 637.3 L949.8 637.5 L951.2 637.6 L952.6 637.8 L954.0 637.9 L955.4 638.1 L956.8 638.2 L958.2 638.4 L959.6 638.5 L960.9 638.7 L962.3 638.8 L963.7 639.0 L965.1 639.1 L966.5 639.3 L967.9 639.4 L969.3 639.5 L970.7 639.7 L972.1 639.8 L973.5 640.0 L974.9 640.1 L976.3 640.3 L977.7 640.4 L979.1 640.6 L980.5 640.8 L981.9 640.9 L983.3 641.1 L984.7 641.3 L986.1 641.5 L987.5 641.7 L988.9 641.9 L990.3 642.1 L991.7 642.3 L993.1 642.5 L994.5 642.8 L995.9 643.0 L997.3 643.2 L998.7 643.4 L1000.1 643.7 L1001.5 643.9 L1002.9 644.1 L1004.3 644.4 L1005.7 644.6" fill="none" stroke="#ff0000" stroke-width="8" stroke-linejoin="round" stroke-linecap="butt" clip-path="url(#cq5)"/>
<g stroke="#262626" stroke-width="1" fill="none" shape-rendering="crispEdges">
<rect x="777.5" y="468.5" width="238.0" height="180.0"/>
<path d="M784.5 648.5v-2.1M784.5 468.5v2.1"/>
<path d="M834.5 648.5v-2.1M834.5 468.5v2.1"/>
<path d="M885.5 648.5v-2.1M885.5 468.5v2.1"/>
<path d="M936.5 648.5v-2.1M936.5 468.5v2.1"/>
<path d="M987.5 648.5v-2.1M987.5 468.5v2.1"/>
<path d="M777.5 588.5h2.1M1015.5 588.5h-2.1"/>
<path d="M777.5 528.5h2.1M1015.5 528.5h-2.1"/>
</g>
<g fill="#262626" font-size="23.3" font-family="'Liberation Sans', sans-serif">
<text x="784.2" y="678" text-anchor="middle">-0.2</text>
<text x="835.0" y="678" text-anchor="middle">0</text>
<text x="885.8" y="678" text-anchor="middle">0.2</text>
<text x="936.6" y="678" text-anchor="middle">0.4</text>
<text x="987.4" y="678" text-anchor="middle">0.6</text>
<text x="770.5" y="658.0" text-anchor="end">0</text>
<text x="770.5" y="596.8" text-anchor="end">2</text>
<text x="770.5" y="536.8" text-anchor="end">4</text>
<text x="770.5" y="476.8" text-anchor="end">6</text>
</g>
<clipPath id="cp6"><rect x="149" y="720" width="237" height="180"/></clipPath>
<clipPath id="cq6"><rect x="142" y="713" width="251" height="194"/></clipPath>
<rect x="148" y="719" width="239" height="182" fill="#fff"/>
<g clip-path="url(#cp6)" fill="#0072bd" stroke="#000" stroke-width="1">
<rect x="154.5" y="891.5" width="6.0" height="11.0"/>
<rect x="161.5" y="878.5" width="6.0" height="24.0"/>
<rect x="169.5" y="815.5" width="6.0" height="87.0"/>
<rect x="176.5" y="735.5" width="7.0" height="167.0"/>
<rect x="184.5" y="792.5" width="6.0" height="110.0"/>
<rect x="192.5" y="814.5" width="6.0" height="88.0"/>
<rect x="199.5" y="868.5" width="6.0" height="34.0"/>
<rect x="207.5" y="887.5" width="6.0" height="15.0"/>
<rect x="214.5" y="884.5" width="7.0" height="18.0"/>
<rect x="222.5" y="886.5" width="6.0" height="16.0"/>
<rect x="230.5" y="897.5" width="6.0" height="5.0"/>
<rect x="237.5" y="897.5" width="6.0" height="5.0"/>
<rect x="252.5" y="894.5" width="6.0" height="8.0"/>
<rect x="260.5" y="878.5" width="6.0" height="24.0"/>
<rect x="267.5" y="893.5" width="7.0" height="9.0"/>
<rect x="283.5" y="887.5" width="6.0" height="15.0"/>
<rect x="290.5" y="864.5" width="6.0" height="38.0"/>
<rect x="298.5" y="842.5" width="6.0" height="60.0"/>
<rect x="305.5" y="833.5" width="7.0" height="69.0"/>
<rect x="313.5" y="866.5" width="6.0" height="36.0"/>
<rect x="321.5" y="876.5" width="6.0" height="26.0"/>
<rect x="328.5" y="894.5" width="6.0" height="8.0"/>
<rect x="336.5" y="882.5" width="6.0" height="20.0"/>
<rect x="343.5" y="856.5" width="7.0" height="46.0"/>
<rect x="351.5" y="874.5" width="6.0" height="28.0"/>
<rect x="359.5" y="872.5" width="6.0" height="30.0"/>
<rect x="366.5" y="894.5" width="6.0" height="8.0"/>
<rect x="374.5" y="898.5" width="6.0" height="4.0"/>
</g>
<path d="M153.8 899.4 L165.0 899.4 L167.4 893.0 L173.0 727.9 L177.7 731.5 L185.6 800.0 L185.6 800.9 L185.7 802.0 L185.7 803.3 L185.8 804.9 L186.0 806.9 L186.2 809.2 L186.7 812.1 L187.2 815.5 L187.9 819.2 L188.5 823.1 L189.3 826.9 L190.0 830.5 L190.8 833.9 L191.6 837.4 L192.4 840.8 L193.3 844.1 L194.2 847.2 L195.0 850.0 L195.8 852.4 L196.6 854.6 L197.3 856.5 L198.1 858.2 L199.0 860.0 L200.0 861.8 L201.1 863.6 L202.3 865.4 L203.6 867.2 L204.9 868.9 L206.2 870.4 L207.5 871.8 L208.7 872.9 L209.9 873.9 L211.1 874.7 L212.3 875.4 L213.6 876.1 L215.0 876.8 L216.5 877.4 L218.1 877.9 L219.7 878.4 L221.4 878.9 L223.2 879.2 L225.0 879.5 L226.9 879.7 L229.0 879.8 L231.1 879.9 L233.2 879.9 L235.4 879.9 L237.5 879.8 L239.6 879.6 L241.7 879.3 L243.8 879.0 L245.8 878.7 L247.9 878.3 L250.0 878.0 L252.1 877.7 L254.2 877.3 L256.2 877.0 L258.3 876.6 L260.4 876.3 L262.5 876.0 L264.6 875.7 L266.7 875.4 L268.8 875.2 L270.8 874.9 L272.9 874.7 L275.0 874.5 L277.1 874.3 L279.2 874.2 L281.2 874.1 L283.3 874.1 L285.4 874.0 L287.5 874.0 L289.6 874.0 L291.7 874.1 L293.8 874.1 L295.8 874.2 L297.9 874.3 L300.0 874.5 L302.1 874.7 L304.2 874.9 L306.2 875.1 L308.3 875.4 L310.4 875.7 L312.5 876.0 L314.6 876.4 L316.7 876.8 L318.8 877.3 L320.8 877.8 L322.9 878.2 L325.0 878.8 L327.1 879.3 L329.2 879.8 L331.2 880.4 L333.3 880.9 L335.4 881.5 L337.5 882.0 L339.6 882.5 L341.7 883.0 L343.8 883.5 L345.8 884.0 L347.9 884.5 L350.0 885.0 L352.0 885.5 L354.0 886.0 L356.0 886.5 L358.0 886.9 L360.2 887.5 L362.5 888.0 L365.3 888.6 L368.5 889.3 L371.8 890.1 L374.9 890.8 L377.6 891.3 L379.5 891.8" fill="none" stroke="#ff0000" stroke-width="8" stroke-linejoin="round" stroke-linecap="butt" clip-path="url(#cq6)"/>
<g stroke="#262626" stroke-width="1" fill="none" shape-rendering="crispEdges">
<rect x="148.5" y="719.5" width="238.0" height="181.0"/>
<path d="M169.5 900.5v-2.1M169.5 719.5v2.1"/>
<path d="M217.5 900.5v-2.1M217.5 719.5v2.1"/>
<path d="M266.5 900.5v-2.1M266.5 719.5v2.1"/>
<path d="M314.5 900.5v-2.1M314.5 719.5v2.1"/>
<path d="M362.5 900.5v-2.1M362.5 719.5v2.1"/>
<path d="M148.5 840.5h2.1M386.5 840.5h-2.1"/>
<path d="M148.5 780.5h2.1M386.5 780.5h-2.1"/>
</g>
<g fill="#262626" font-size="23.3" font-family="'Liberation Sans', sans-serif">
<text x="169.5" y="930" text-anchor="middle">0</text>
<text x="217.8" y="930" text-anchor="middle">0.2</text>
<text x="266.0" y="930" text-anchor="middle">0.4</text>
<text x="314.2" y="930" text-anchor="middle">0.6</text>
<text x="362.5" y="930" text-anchor="middle">0.8</text>
<text x="141.5" y="910.0" text-anchor="end">0</text>
<text x="141.5" y="848.5" text-anchor="end">2</text>
<text x="141.5" y="788.1" text-anchor="end">4</text>
<text x="141.5" y="727.8" text-anchor="end">6</text>
</g>
<clipPath id="cp7"><rect x="462" y="720" width="238" height="180"/></clipPath>
<clipPath id="cq7"><rect x="455" y="713" width="252" height="194"/></clipPath>
<rect x="461" y="719" width="240" height="182" fill="#fff"/>
<g clip-path="url(#cp7)" fill="#0072bd" stroke="#000" stroke-width="1">
<rect x="468.5" y="885.5" width="6.0" height="17.0"/>
<rect x="476.5" y="893.5" width="6.0" height="9.0"/>
<rect x="521.5" y="891.5" width="6.0" height="11.0"/>
<rect x="529.5" y="890.5" width="6.0" height="12.0"/>
<rect x="544.5" y="896.5" width="6.0" height="6.0"/>
<rect x="551.5" y="896.5" width="7.0" height="6.0"/>
<rect x="559.5" y="895.5" width="6.0" height="7.0"/>
<rect x="567.5" y="854.5" width="6.0" height="48.0"/>
<rect x="574.5" y="749.5" width="6.0" height="153.0"/>
<rect x="582.5" y="740.5" width="6.0" height="162.0"/>
<rect x="589.5" y="768.5" width="6.0" height="134.0"/>
<rect x="597.5" y="643.5" width="6.0" height="259.0"/>
<rect x="604.5" y="817.5" width="7.0" height="85.0"/>
<rect x="612.5" y="817.5" width="6.0" height="85.0"/>
<rect x="620.5" y="879.5" width="6.0" height="23.0"/>
<rect x="627.5" y="863.5" width="6.0" height="39.0"/>
<rect x="635.5" y="881.5" width="6.0" height="21.0"/>
<rect x="642.5" y="853.5" width="7.0" height="49.0"/>
<rect x="650.5" y="843.5" width="6.0" height="59.0"/>
<rect x="658.5" y="837.5" width="6.0" height="65.0"/>
<rect x="665.5" y="848.5" width="6.0" height="54.0"/>
<rect x="673.5" y="888.5" width="6.0" height="14.0"/>
<rect x="680.5" y="895.5" width="7.0" height="7.0"/>
<rect x="688.5" y="895.5" width="6.0" height="7.0"/>
</g>
<path d="M467.0 900.3 L467.2 900.3 L467.6 900.3 L467.9 900.3 L468.4 900.3 L468.8 900.3 L469.2 900.3 L469.7 900.3 L470.1 900.3 L470.5 900.3 L470.9 900.3 L471.3 900.3 L471.6 900.3 L472.0 900.3 L472.4 900.2 L472.8 900.2 L473.2 900.2 L473.6 900.2 L474.0 900.2 L474.4 900.2 L474.7 900.2 L475.1 900.2 L475.5 900.2 L475.9 900.2 L476.3 900.1 L476.7 900.1 L477.1 900.1 L477.4 900.1 L477.8 900.1 L478.2 900.1 L478.6 900.1 L479.0 900.0 L479.4 900.0 L479.8 900.0 L480.2 900.0 L480.5 900.0 L480.9 900.0 L481.3 900.0 L481.7 899.9 L482.1 899.9 L482.5 899.9 L482.9 899.9 L483.2 899.9 L483.6 899.8 L484.0 899.8 L484.4 899.8 L484.8 899.8 L485.2 899.8 L485.6 899.7 L486.0 899.7 L486.3 899.7 L486.7 899.7 L487.1 899.6 L487.5 899.6 L487.9 899.6 L488.3 899.6 L488.7 899.5 L489.1 899.5 L489.4 899.5 L489.8 899.4 L490.2 899.4 L490.6 899.4 L491.0 899.3 L491.4 899.3 L491.8 899.3 L492.1 899.2 L492.5 899.2 L492.9 899.2 L493.3 899.1 L493.7 899.1 L494.1 899.0 L494.5 899.0 L494.9 899.0 L495.2 898.9 L495.6 898.9 L496.0 898.8 L496.4 898.8 L496.8 898.7 L497.2 898.7 L497.6 898.6 L497.9 898.6 L498.3 898.5 L498.7 898.5 L499.1 898.4 L499.5 898.3 L499.9 898.3 L500.3 898.2 L500.7 898.2 L501.0 898.1 L501.4 898.0 L501.8 898.0 L502.2 897.9 L502.6 897.8 L503.0 897.8 L503.4 897.7 L503.8 897.6 L504.1 897.5 L504.5 897.5 L504.9 897.4 L505.3 897.3 L505.7 897.2 L506.1 897.1 L506.5 897.1 L506.8 897.0 L507.2 896.9 L507.6 896.8 L508.0 896.7 L508.4 896.6 L508.8 896.5 L509.2 896.4 L509.6 896.3 L509.9 896.2 L510.3 896.1 L510.7 896.0 L511.1 895.9 L511.5 895.8 L511.9 895.7 L512.3 895.5 L512.6 895.4 L513.0 895.3 L513.4 895.2 L513.8 895.1 L514.2 894.9 L514.6 894.8 L515.0 894.7 L515.4 894.5 L515.7 894.4 L516.1 894.3 L516.5 894.1 L516.9 894.0 L517.3 893.8 L517.7 893.7 L518.1 893.5 L518.5 893.4 L518.8 893.2 L519.2 893.0 L519.6 892.9 L520.0 892.7 L520.4 892.5 L520.8 892.4 L521.2 892.2 L521.5 892.0 L521.9 891.8 L522.3 891.6 L522.7 891.5 L523.1 891.3 L523.5 891.1 L523.9 890.9 L524.3 890.7 L524.6 890.5 L525.0 890.3 L525.4 890.1 L525.8 889.8 L526.2 889.6 L526.6 889.4 L527.0 889.2 L527.3 889.0 L527.7 888.7 L528.1 888.5 L528.5 888.2 L528.9 888.0 L529.3 887.8 L529.7 887.5 L530.1 887.3 L530.4 887.0 L530.8 886.8 L531.2 886.5 L531.6 886.2 L532.0 886.0 L532.4 885.7 L532.8 885.4 L533.2 885.1 L533.5 884.8 L533.9 884.6 L534.3 884.3 L534.7 884.0 L535.1 883.7 L535.5 883.4 L535.9 883.1 L536.2 882.8 L536.6 882.5 L537.0 882.1 L537.4 881.8 L537.8 881.5 L538.2 881.2 L538.6 880.8 L539.0 880.5 L539.3 880.2 L539.7 879.8 L540.1 879.5 L540.5 879.1 L540.9 878.8 L541.3 878.4 L541.7 878.1 L542.0 877.7 L542.4 877.3 L542.8 876.9 L543.2 876.6 L543.6 876.2 L544.0 875.8 L544.4 875.4 L544.8 875.0 L545.1 874.6 L545.5 874.2 L545.9 873.8 L546.3 873.4 L546.7 873.0 L547.1 872.6 L547.5 872.2 L547.9 871.8 L548.2 871.4 L548.6 871.0 L549.0 870.5 L549.4 870.1 L549.8 869.7 L550.2 869.2 L550.6 868.8 L550.9 868.4 L551.3 867.9 L551.7 867.5 L552.1 867.0 L552.5 866.6 L552.9 866.1 L553.3 865.6 L553.7 865.2 L554.0 864.7 L554.4 864.3 L554.8 863.8 L555.2 863.3 L555.6 862.8 L556.0 862.4 L556.4 861.9 L556.7 861.4 L557.1 860.9 L557.5 860.4 L557.9 860.0 L558.3 859.5 L558.7 859.0 L559.1 858.5 L559.5 858.0 L559.8 857.5 L560.2 857.0 L560.6 856.5 L561.0 856.0 L561.4 855.5 L561.8 855.0 L562.2 854.5 L562.6 854.0 L562.9 853.5 L563.3 853.0 L563.7 852.5 L564.1 852.0 L564.5 851.5 L564.9 851.0 L565.3 850.5 L565.6 850.0 L566.0 849.4 L566.4 848.9 L566.8 848.4 L567.2 847.9 L567.6 847.4 L568.0 846.9 L568.4 846.4 L568.7 845.9 L569.1 845.4 L569.5 844.9 L569.9 844.4 L570.3 843.9 L570.7 843.4 L571.1 842.9 L571.4 842.4 L571.8 841.9 L572.2 841.4 L572.6 840.9 L573.0 840.4 L573.4 839.9 L573.8 839.4 L574.2 838.9 L574.5 838.5 L574.9 838.0 L575.3 837.5 L575.7 837.0 L576.1 836.5 L576.5 836.1 L576.9 835.6 L577.3 835.1 L577.6 834.7 L578.0 834.2 L578.4 833.8 L578.8 833.3 L579.2 832.9 L579.6 832.4 L580.0 832.0 L580.3 831.5 L580.7 831.1 L581.1 830.7 L581.5 830.3 L581.9 829.8 L582.3 829.4 L582.7 829.0 L583.1 828.6 L583.4 828.2 L583.8 827.8 L584.2 827.4 L584.6 827.0 L585.0 826.7 L585.4 826.3 L585.8 825.9 L586.2 825.5 L586.5 825.2 L586.9 824.8 L587.3 824.5 L587.7 824.1 L588.1 823.8 L588.5 823.4 L589.0 823.1 L589.4 822.7 L589.9 822.4 L590.2 822.1 L590.6 821.8 L590.8 821.6 L597.5 758.6 L597.8 760.0 L598.1 762.1 L598.6 764.4 L599.1 767.1 L599.6 769.9 L600.1 772.6 L600.6 775.2 L601.0 777.5 L601.4 779.7 L601.7 781.8 L602.1 783.8 L602.4 785.8 L602.8 787.7 L603.1 789.5 L603.4 791.2 L603.8 792.7 L604.1 794.0 L604.5 795.1 L604.8 796.1 L605.2 797.0 L605.5 797.7 L605.9 798.5 L606.2 799.2 L606.6 800.0 L606.9 800.7 L607.1 801.2 L607.4 801.7 L607.6 802.1 L607.9 802.6 L608.3 803.2 L608.9 804.0 L609.7 805.0 L610.7 806.2 L611.9 807.5 L613.2 809.0 L614.7 810.6 L616.2 812.3 L617.8 814.0 L619.3 815.8 L620.9 817.6 L622.4 819.4 L624.1 821.3 L625.7 823.3 L627.4 825.3 L629.1 827.4 L630.8 829.5 L632.5 831.5 L634.0 833.6 L635.5 835.6 L637.0 837.6 L638.3 839.6 L639.7 841.7 L641.1 843.7 L642.5 845.8 L644.1 848.0 L645.8 850.2 L647.6 852.5 L649.7 855.0 L651.8 857.5 L654.1 860.1 L656.3 862.6 L658.5 865.1 L660.6 867.4 L662.5 869.5 L664.3 871.4 L665.9 873.2 L667.5 874.9 L669.0 876.4 L670.5 877.9 L672.0 879.3 L673.5 880.7 L675.0 882.0 L676.6 883.3 L678.2 884.5 L679.9 885.6 L681.6 886.7 L683.2 887.7 L684.7 888.6 L686.2 889.5 L687.5 890.3 L688.7 890.9 L689.9 891.6 L691.0 892.1 L692.0 892.5 L693.0 892.9 L693.8 893.2 L694.4 893.5 L695.0 893.8" fill="none" stroke="#ff0000" stroke-width="8" stroke-linejoin="round" stroke-linecap="butt" clip-path="url(#cq7)"/>
<g stroke="#262626" stroke-width="1" fill="none" shape-rendering="crispEdges">
<rect x="461.5" y="719.5" width="239.0" height="181.0"/>
<path d="M525.5 900.5v-2.1M525.5 719.5v2.1"/>
<path d="M590.5 900.5v-2.1M590.5 719.5v2.1"/>
<path d="M655.5 900.5v-2.1M655.5 719.5v2.1"/>
<path d="M461.5 843.5h2.1M700.5 843.5h-2.1"/>
<path d="M461.5 786.5h2.1M700.5 786.5h-2.1"/>
<path d="M461.5 729.5h2.1M700.5 729.5h-2.1"/>
</g>
<g fill="#262626" font-size="23.3" font-family="'Liberation Sans', sans-serif">
<text x="525.5" y="930" text-anchor="middle">-0.2</text>
<text x="590.5" y="930" text-anchor="middle">0</text>
<text x="655.5" y="930" text-anchor="middle">0.2</text>
<text x="455.8" y="910.0" text-anchor="end">0</text>
<text x="455.8" y="851.6" text-anchor="end">2</text>
<text x="455.8" y="794.4" text-anchor="end">4</text>
<text x="455.8" y="737.2" text-anchor="end">6</text>
</g>
<clipPath id="cp8"><rect x="778" y="720" width="237" height="180"/></clipPath>
<clipPath id="cq8"><rect x="771" y="713" width="251" height="194"/></clipPath>
<rect x="777" y="719" width="239" height="182" fill="#fff"/>
<g clip-path="url(#cp8)" fill="#0072bd" stroke="#000" stroke-width="1">
<rect x="783.5" y="894.5" width="6.0" height="8.0"/>
<rect x="791.5" y="865.5" width="6.0" height="37.0"/>
<rect x="798.5" y="889.5" width="6.0" height="13.0"/>
<rect x="821.5" y="895.5" width="6.0" height="7.0"/>
<rect x="829.5" y="879.5" width="6.0" height="23.0"/>
<rect x="836.5" y="834.5" width="6.0" height="68.0"/>
<rect x="844.5" y="770.5" width="6.0" height="132.0"/>
<rect x="851.5" y="755.5" width="7.0" height="147.0"/>
<rect x="859.5" y="759.5" width="6.0" height="143.0"/>
<rect x="867.5" y="648.5" width="6.0" height="254.0"/>
<rect x="874.5" y="758.5" width="6.0" height="144.0"/>
<rect x="882.5" y="807.5" width="6.0" height="95.0"/>
<rect x="889.5" y="810.5" width="6.0" height="92.0"/>
<rect x="897.5" y="874.5" width="6.0" height="28.0"/>
<rect x="904.5" y="874.5" width="7.0" height="28.0"/>
<rect x="912.5" y="865.5" width="6.0" height="37.0"/>
<rect x="920.5" y="849.5" width="6.0" height="53.0"/>
<rect x="927.5" y="873.5" width="6.0" height="29.0"/>
<rect x="935.5" y="860.5" width="6.0" height="42.0"/>
<rect x="942.5" y="859.5" width="7.0" height="43.0"/>
<rect x="950.5" y="820.5" width="6.0" height="82.0"/>
<rect x="958.5" y="859.5" width="6.0" height="43.0"/>
<rect x="965.5" y="872.5" width="6.0" height="30.0"/>
<rect x="973.5" y="887.5" width="6.0" height="15.0"/>
<rect x="1003.5" y="896.5" width="6.0" height="6.0"/>
</g>
<path d="M782.7 895.1 L784.1 894.6 L785.5 894.1 L786.9 893.5 L788.4 893.0 L789.8 892.4 L791.2 891.7 L792.6 891.0 L794.0 890.3 L795.4 889.5 L796.9 888.7 L798.3 887.8 L799.7 886.9 L801.1 885.9 L802.5 884.9 L803.9 883.9 L805.4 882.7 L806.8 881.6 L808.2 880.3 L809.6 879.0 L811.0 877.7 L812.4 876.3 L813.9 874.8 L815.3 873.3 L816.7 871.8 L818.1 870.2 L819.5 868.5 L821.0 866.8 L822.4 865.0 L823.8 863.1 L825.2 861.3 L826.6 859.3 L828.0 857.4 L829.5 855.4 L830.9 853.3 L832.3 851.2 L833.7 849.1 L835.1 846.9 L836.5 844.8 L838.0 842.6 L839.4 840.3 L840.8 838.1 L842.2 835.9 L843.6 833.6 L845.0 831.4 L846.5 829.2 L847.9 827.0 L849.3 824.8 L850.7 822.6 L852.1 820.5 L853.6 818.3 L855.0 816.3 L856.4 814.3 L857.8 812.3 L859.2 810.4 L860.6 808.6 L862.1 806.8 L863.5 805.1 L864.9 803.5 L866.3 802.0 L867.7 800.5 L869.1 799.2 L870.6 798.0 L872.0 796.8 L873.4 795.8 L874.8 794.9 L876.2 794.1 L877.7 793.4 L879.1 792.9 L880.5 792.4 L881.9 792.1 L883.3 791.9 L884.7 791.9 L886.2 791.9 L887.6 792.1 L889.0 792.4 L890.4 792.9 L891.8 793.4 L893.2 794.1 L894.7 794.9 L896.1 795.8 L897.5 796.8 L898.9 798.0 L900.3 799.2 L901.8 800.5 L903.2 802.0 L904.6 803.5 L906.0 805.1 L907.4 806.8 L908.8 808.6 L910.3 810.4 L911.7 812.3 L913.1 814.3 L914.5 816.3 L915.9 818.3 L917.3 820.5 L918.8 822.6 L920.2 824.8 L921.6 827.0 L923.0 829.2 L924.4 831.4 L925.8 833.6 L927.3 835.9 L928.7 838.1 L930.1 840.3 L931.5 842.6 L932.9 844.8 L934.4 846.9 L935.8 849.1 L937.2 851.2 L938.6 853.3 L940.0 855.4 L941.4 857.4 L942.9 859.3 L944.3 861.3 L945.7 863.1 L947.1 865.0 L948.5 866.8 L949.9 868.5 L951.4 870.2 L952.8 871.8 L954.2 873.3 L955.6 874.8 L957.0 876.3 L958.5 877.7 L959.9 879.0 L961.3 880.3 L962.7 881.6 L964.1 882.7 L965.5 883.9 L967.0 884.9 L968.4 885.9 L969.8 886.9 L971.2 887.8 L972.6 888.7 L974.0 889.5 L975.5 890.3 L976.9 891.0 L978.3 891.7 L979.7 892.4 L981.1 893.0 L982.5 893.5 L984.0 894.1 L985.4 894.6 L986.8 895.1 L988.2 895.5 L989.6 895.9 L991.1 896.3 L992.5 896.6 L993.9 897.0 L995.3 897.3 L996.7 897.5 L998.1 897.8 L999.6 898.0 L1001.0 898.3 L1002.4 898.5 L1003.8 898.7 L1005.2 898.8 L1006.6 899.0 L1008.1 899.1 L1009.5 899.3" fill="none" stroke="#ff0000" stroke-width="8" stroke-linejoin="round" stroke-linecap="butt" clip-path="url(#cq8)"/>
<g stroke="#262626" stroke-width="1" fill="none" shape-rendering="crispEdges">
<rect x="777.5" y="719.5" width="238.0" height="181.0"/>
<path d="M800.5 900.5v-2.1M800.5 719.5v2.1"/>
<path d="M881.5 900.5v-2.1M881.5 719.5v2.1"/>
<path d="M962.5 900.5v-2.1M962.5 719.5v2.1"/>
<path d="M777.5 844.5h2.1M1015.5 844.5h-2.1"/>
<path d="M777.5 788.5h2.1M1015.5 788.5h-2.1"/>
<path d="M777.5 732.5h2.1M1015.5 732.5h-2.1"/>
</g>
<g fill="#262626" font-size="23.3" font-family="'Liberation Sans', sans-serif">
<text x="800.5" y="930" text-anchor="middle">-0.2</text>
<text x="881.5" y="930" text-anchor="middle">0</text>
<text x="962.5" y="930" text-anchor="middle">0.2</text>
<text x="770.5" y="910.0" text-anchor="end">0</text>
<text x="770.5" y="852.8" text-anchor="end">2</text>
<text x="770.5" y="796.8" text-anchor="end">4</text>
<text x="770.5" y="740.8" text-anchor="end">6</text>
</g>
</svg>
</body>
</html>
